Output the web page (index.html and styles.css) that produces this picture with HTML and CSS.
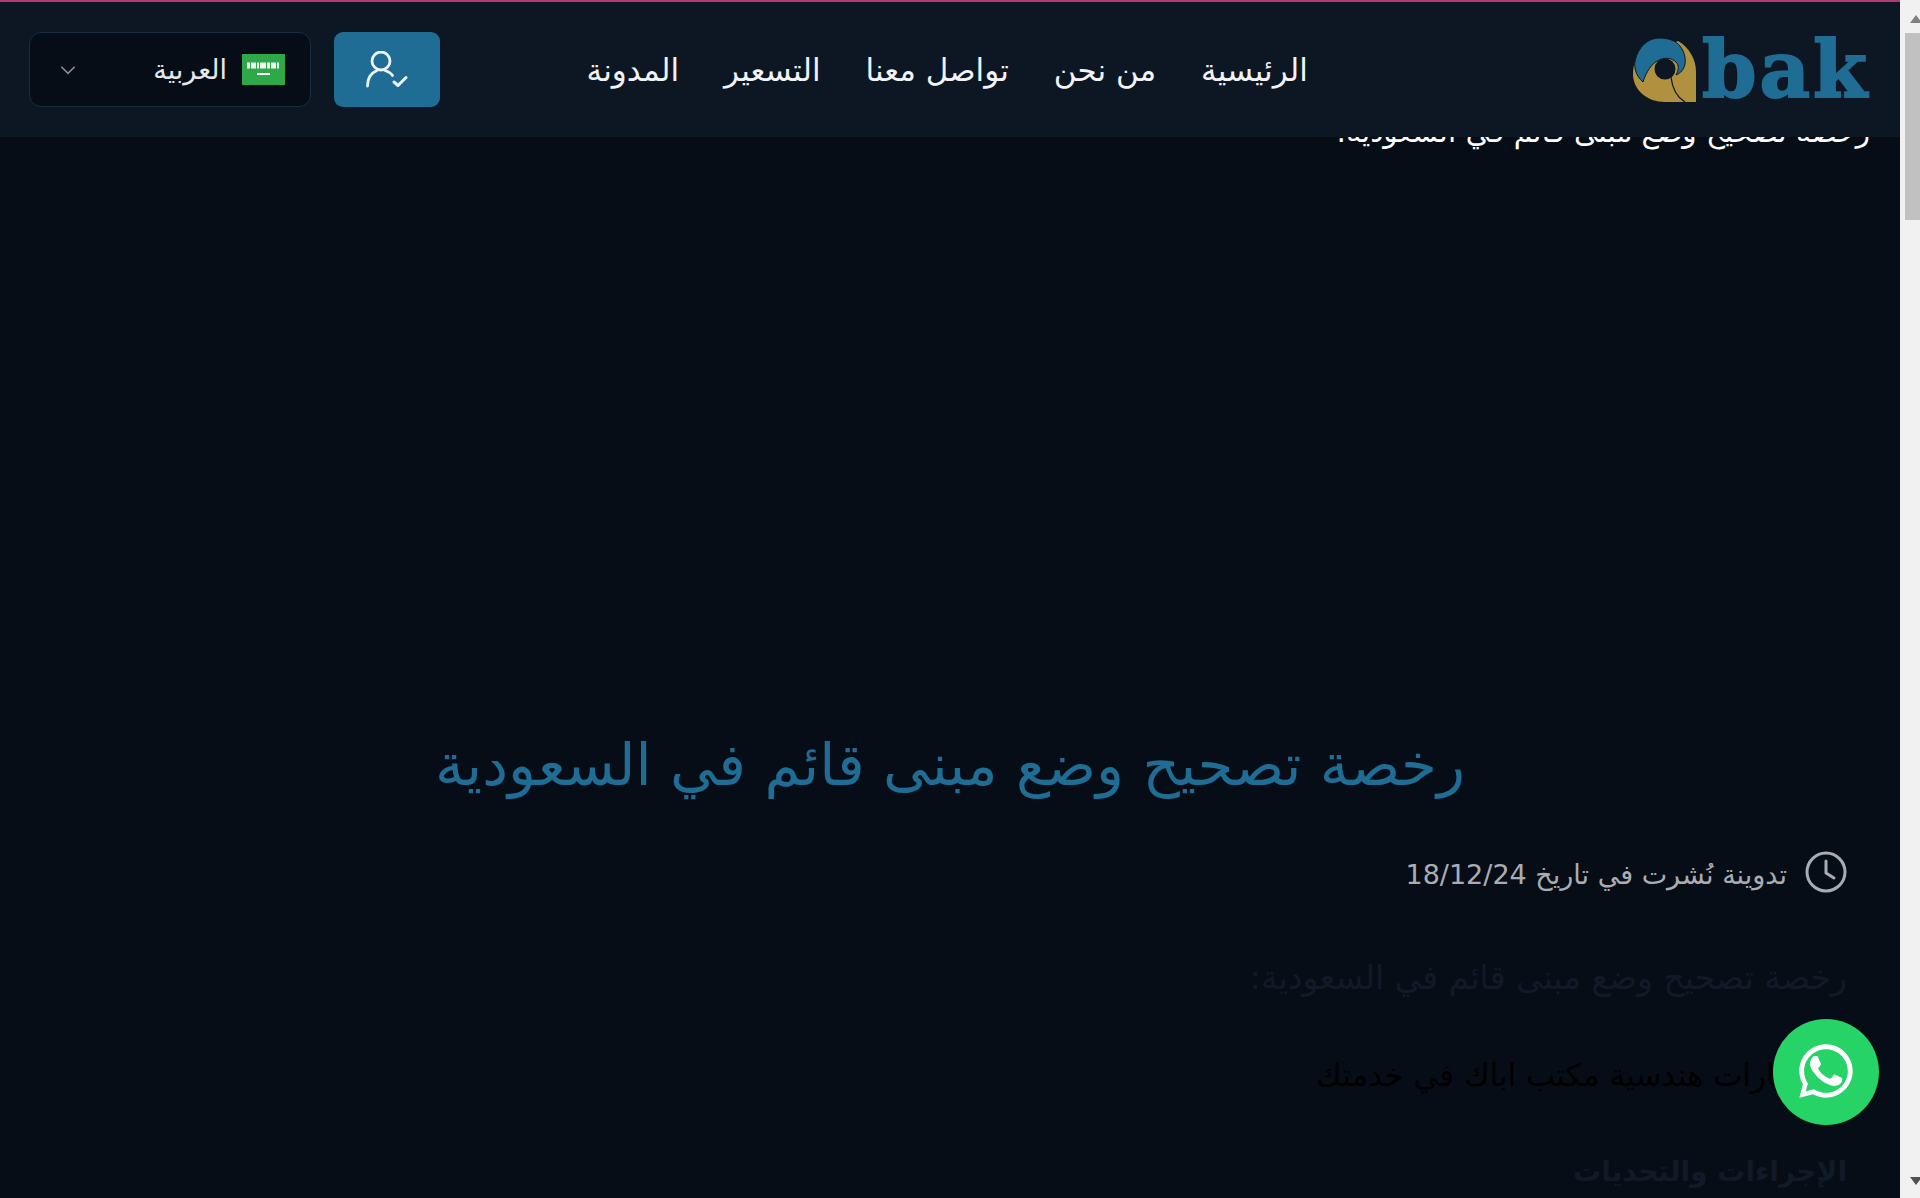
FILE: index.html
```html
<!DOCTYPE html>
<html lang="ar" dir="rtl">
<head>
    <meta charset="UTF-8">
    <meta name="viewport" content="width=device-width, initial-scale=1.0">
    <title>رخصة تصحيح وضع مبنى قائم في السعودية</title>
    <link rel="stylesheet" href="styles.css">
</head>
<body>
    <div class="window">
        <div class="page">
            <header class="site-header">
                <a class="logo" href="#">
                    <svg class="logo-mark" viewBox="0 0 64 64" width="64" height="64">
                        <path fill="#b0913f" d="M45 3C57 10 63 22 63 34V64H32C14 64 0 52 0 36C0 30 1 26 3 22Z"/>
                        <path fill="#1f6d94" stroke="#0d1623" stroke-width="1" d="M10 44C3 38 1 30 2 23C5 9 15 0 26 0C36 0 43 3 47 8C51 13 53 20 52 26C51 31 48 35 43 37C46 32 46 27 43 24C39 20 32 19 26 22C19 25 13 34 10 44Z"/>
                        <circle cx="32" cy="31" r="10.500" fill="#0d1623"/>
                        <path fill="none" stroke="#0d1623" stroke-width="1.200" d="M38 39C39 48 42 58 52 64"/>
                    </svg>
                    <span class="logo-text">bak</span>
                </a>
                <nav class="main-nav">
                    <a href="#">الرئيسية</a>
                    <a href="#">من نحن</a>
                    <a href="#">تواصل معنا</a>
                    <a href="#">التسعير</a>
                    <a href="#">المدونة</a>
                </nav>
                <div class="header-actions">
                    <button class="login-btn" type="button" aria-label="login">
                        <svg viewBox="0 0 42 37" width="42" height="37" fill="none" stroke="#eaf4f9" stroke-width="2.800" stroke-linecap="round" stroke-linejoin="round">
                            <circle cx="15" cy="10" r="9"/>
                            <path d="M1.500 35C1.500 27 5 22 11 19.500"/>
                            <path d="M19 19.500C22 20.500 25 22 26.500 24.500"/>
                            <path d="M28 31l4 3.500 8-8" stroke-width="3"/>
                        </svg>
                    </button>
                    <div class="lang-select">
                        <svg class="flag" viewBox="0 0 43 31" width="43" height="31">
                            <rect width="43" height="31" fill="#2fa84a"/>
                            <path d="M5 11.500H38" stroke="#eef8f0" stroke-width="6" stroke-dasharray="3 1 5 1 2 1 6 1"/>
                            <rect x="15" y="19" width="13" height="2" fill="#fff"/>
                        </svg>
                        <span class="lang-name">العربية</span>
                        <svg class="chevron" viewBox="0 0 20 12" width="18" height="10" fill="none" stroke="#8b8f96" stroke-width="1.800">
                            <path d="M2 2l8 8 8-8"/>
                        </svg>
                    </div>
                </div>
            </header>
            <main class="content">
                <p class="crumb">رخصة تصحيح وضع مبنى قائم في السعودية:</p>
                <h1 class="post-title">رخصة تصحيح وضع مبنى قائم في السعودية</h1>
                <div class="post-meta">
                    <svg viewBox="0 0 42 42" width="42" height="42" fill="none" stroke="#a9adb3" stroke-width="3" stroke-linecap="round" stroke-linejoin="round">
                        <circle cx="21" cy="21" r="19"/>
                        <path d="M21 10V22l8 5"/>
                    </svg>
                    <span class="post-date">تدوينة نُشرت في تاريخ 18/12/24</span>
                </div>
                <h2 class="faint-title">رخصة تصحيح وضع مبنى قائم في السعودية:</h2>
                <p class="dark-text">استشارات هندسية مكتب اباك في خدمتك</p>
                <h2 class="faint-sub">الإجراءات والتحديات</h2>
            </main>
            <a class="whatsapp" href="#" aria-label="whatsapp">
                <svg viewBox="0 0 24 24" width="64" height="64" fill="#fff">
                    <path d="M17.500 14.400c-.3-.15-1.760-.87-2.030-.97-.27-.1-.47-.15-.67.15-.2.3-.77.97-.94 1.170-.17.2-.35.22-.65.07-.3-.15-1.260-.46-2.400-1.480-.89-.79-1.490-1.770-1.660-2.070-.17-.3-.02-.46.13-.61.13-.13.3-.35.45-.52.15-.17.2-.3.3-.5.1-.2.05-.37-.02-.52-.08-.15-.67-1.620-.92-2.220-.24-.58-.49-.5-.67-.51h-.57c-.2 0-.52.07-.79.37-.27.3-1.040 1.020-1.040 2.480s1.070 2.880 1.220 3.080c.15.2 2.100 3.200 5.080 4.490.71.31 1.260.49 1.690.63.71.23 1.360.2 1.870.12.57-.09 1.760-.72 2.010-1.410.25-.7.25-1.290.17-1.410-.07-.13-.27-.2-.57-.35zM12 2C6.500 2 2 6.500 2 12c0 1.760.46 3.480 1.340 5L2 22l5.130-1.320A9.960 9.960 0 0 0 12 22c5.500 0 10-4.500 10-10S17.500 2 12 2zm0 18.200c-1.500 0-2.970-.4-4.250-1.160l-.3-.18-3.040.78.81-2.960-.2-.31A8.200 8.200 0 0 1 3.800 12c0-4.520 3.680-8.200 8.200-8.200 4.520 0 8.200 3.680 8.200 8.200 0 4.520-3.680 8.200-8.200 8.200z"/>
                </svg>
            </a>
        </div>
        <div class="scrollbar">
            <span class="arrow arrow-up"></span>
            <span class="thumb"></span>
            <span class="arrow arrow-down"></span>
        </div>
    </div>
</body>
</html>
```

FILE: styles.css
```css
html, body {
    margin: 0;
    height: 100%;
    overflow: hidden;
}
body {
    font-family: "DejaVu Sans", "Noto Sans", sans-serif;
    background-color: #070d16;
}
a {
    color: inherit;
    text-decoration: none;
}
.window {
    display: flex;
    height: 1198px;
    direction: ltr;
}
.page {
    position: relative;
    flex: 1;
    overflow: hidden;
    direction: rtl;
    background-color: #070d16;
}

/* header */
.site-header {
    position: relative;
    z-index: 2;
    display: flex;
    align-items: center;
    height: 135px;
    padding: 0 30px 0 29px;
    border-top: 2px solid #b33a6e;
    background-color: #0d1623;
}
.logo {
    display: flex;
    direction: ltr;
    align-items: center;
    gap: 5px;
    margin-left: 325px;
}
.logo-text {
    font-family: "DejaVu Serif", serif;
    font-weight: 700;
    font-size: 78px;
    line-height: 64px;
    letter-spacing: 3px;
    color: #1f6d94;
    -webkit-text-stroke: 2px #1f6d94;
}
.main-nav {
    display: flex;
    gap: 45px;
    color: #f1f3f5;
    font-size: 31px;
}
.header-actions {
    display: flex;
    gap: 23px;
    margin-right: auto;
}
.login-btn {
    display: flex;
    align-items: center;
    justify-content: center;
    width: 106px;
    height: 75px;
    padding: 0;
    border: 0;
    border-radius: 9px;
    background-color: #1f6d94;
}
.lang-select {
    display: flex;
    align-items: center;
    gap: 15px;
    width: 282px;
    height: 75px;
    box-sizing: border-box;
    padding: 0 25px 0 29px;
    border: 1px solid #1c2c40;
    border-radius: 12px;
    background-color: #070d16;
    color: #e6e8eb;
    font-size: 27px;
}
.chevron {
    margin-right: auto;
}

/* post */
.content {
    margin-top: -25px;
    padding: 0 53px;
}
.crumb {
    margin: 0 -23px 0 0;
    color: #fff;
    font-size: 29.500px;
    line-height: 40px;
}
.post-title {
    margin: 573px 0 0;
    text-align: center;
    font-weight: 400;
    font-size: 58px;
    line-height: 80px;
    color: #1f6d94;
}
.post-meta {
    display: flex;
    align-items: center;
    gap: 18px;
    margin-top: 46px;
    color: #a9adb3;
    font-size: 27px;
}
.post-date {
    padding-top: 4px;
}
.faint-title {
    margin: 65px 0 0;
    font-weight: 400;
    font-size: 33px;
    line-height: 40px;
    color: #111a28;
}
.dark-text {
    margin: 57px 0 0;
    font-size: 31px;
    line-height: 40px;
    color: #000;
}
.faint-sub {
    margin: 57px 0 0;
    font-size: 28px;
    line-height: 40px;
    color: #111a28;
}
.whatsapp {
    position: absolute;
    top: 1019px;
    right: 21px;
    z-index: 3;
    display: flex;
    align-items: center;
    justify-content: center;
    width: 106px;
    height: 106px;
    border-radius: 50%;
    background-color: #25d366;
}
.whatsapp svg {
    margin-bottom: 3px;
}

/* scrollbar, cut off at the window edge in the capture */
.scrollbar {
    display: flex;
    flex-direction: column;
    align-items: flex-start;
    width: 20px;
    overflow: hidden;
    background-color: #f1f1f1;
}
.arrow {
    width: 0;
    height: 0;
    margin-left: 10px;
    border-left: 6px solid transparent;
    border-right: 6px solid transparent;
}
.arrow-up {
    margin-top: 15px;
    border-bottom: 8px solid #808080;
}
.thumb {
    width: 15px;
    height: 187px;
    margin: 10px 0 0 5px;
    background-color: #c1c1c1;
}
.arrow-down {
    margin-top: auto;
    margin-bottom: 13px;
    border-top: 8px solid #505050;
}
```
